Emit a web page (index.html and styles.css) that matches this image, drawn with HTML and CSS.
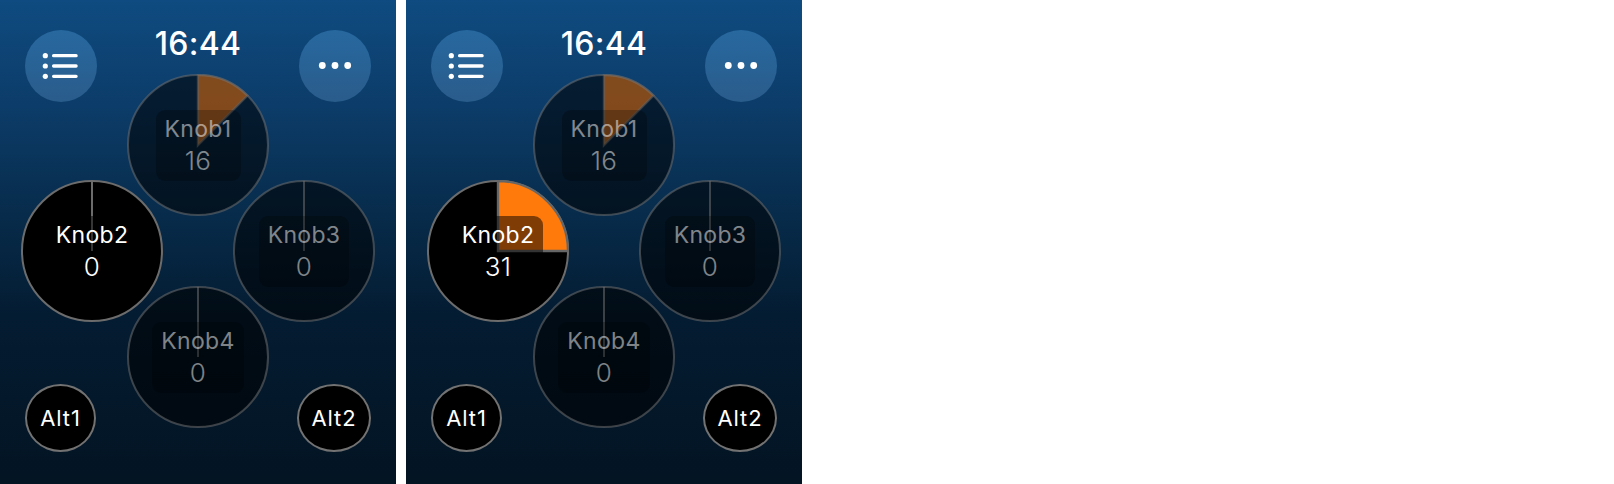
FILE: index.html
```html
<!DOCTYPE html>
<html lang="en">
<head>
<meta charset="utf-8">
<title>Knobs</title>
<link rel="stylesheet" href="styles.css">
</head>
<body>
<main class="screens">
  <section class="panel">
    <header class="topbar">
      <button class="round-btn"><svg class="icon" viewBox="0 0 72 72"><circle cx="20.3" cy="25.7" r="2.6"/><circle cx="20.3" cy="36" r="2.6"/><circle cx="20.3" cy="46.3" r="2.6"/><path d="M28.6 25.7h22.5M28.6 36h22.5M28.6 46.3h22.5"/></svg></button>
      <div class="time">16:44</div>
      <button class="round-btn"><svg class="icon" viewBox="0 0 72 72"><circle cx="23.3" cy="35.5" r="3.4"/><circle cx="36" cy="35.5" r="3.4"/><circle cx="48.7" cy="35.5" r="3.4"/></svg></button>
    </header>
    <div class="knobs">
      <div class="knob dim k1"><svg class="dial" viewBox="0 0 142 142"><circle class="face" cx="71" cy="71" r="70"/><path class="wedge" d="M71 71V1A70 70 0 0 1 120.5 21.5Z"/></svg><div class="tile"><span>Knob1</span><span class="value">16</span></div></div>
      <div class="knob k2"><svg class="dial" viewBox="0 0 142 142"><circle class="face" cx="71" cy="71" r="70"/><path class="needle" d="M71 71V1"/></svg><div class="tile"><span>Knob2</span><span class="value">0</span></div></div>
      <div class="knob dim k3"><svg class="dial" viewBox="0 0 142 142"><circle class="face" cx="71" cy="71" r="70"/><path class="needle" d="M71 71V1"/></svg><div class="tile"><span>Knob3</span><span class="value">0</span></div></div>
      <div class="knob dim k4"><svg class="dial" viewBox="0 0 142 142"><circle class="face" cx="71" cy="71" r="70"/><path class="needle" d="M71 71V1"/></svg><div class="tile"><span>Knob4</span><span class="value">0</span></div></div>
    </div>
    <footer class="altbar">
      <button class="alt alt1">Alt1</button>
      <button class="alt alt2">Alt2</button>
    </footer>
  </section>
  <section class="panel">
    <header class="topbar">
      <button class="round-btn"><svg class="icon" viewBox="0 0 72 72"><circle cx="20.3" cy="25.7" r="2.6"/><circle cx="20.3" cy="36" r="2.6"/><circle cx="20.3" cy="46.3" r="2.6"/><path d="M28.6 25.7h22.5M28.6 36h22.5M28.6 46.3h22.5"/></svg></button>
      <div class="time">16:44</div>
      <button class="round-btn"><svg class="icon" viewBox="0 0 72 72"><circle cx="23.3" cy="35.5" r="3.4"/><circle cx="36" cy="35.5" r="3.4"/><circle cx="48.7" cy="35.5" r="3.4"/></svg></button>
    </header>
    <div class="knobs">
      <div class="knob dim k1"><svg class="dial" viewBox="0 0 142 142"><circle class="face" cx="71" cy="71" r="70"/><path class="wedge" d="M71 71V1A70 70 0 0 1 120.5 21.5Z"/></svg><div class="tile"><span>Knob1</span><span class="value">16</span></div></div>
      <div class="knob k2"><svg class="dial" viewBox="0 0 142 142"><circle class="face" cx="71" cy="71" r="70"/><path class="wedge" d="M71 71V1A70 70 0 0 1 141 71Z"/></svg><div class="tile"><span>Knob2</span><span class="value">31</span></div></div>
      <div class="knob dim k3"><svg class="dial" viewBox="0 0 142 142"><circle class="face" cx="71" cy="71" r="70"/><path class="needle" d="M71 71V1"/></svg><div class="tile"><span>Knob3</span><span class="value">0</span></div></div>
      <div class="knob dim k4"><svg class="dial" viewBox="0 0 142 142"><circle class="face" cx="71" cy="71" r="70"/><path class="needle" d="M71 71V1"/></svg><div class="tile"><span>Knob4</span><span class="value">0</span></div></div>
    </div>
    <footer class="altbar">
      <button class="alt alt1">Alt1</button>
      <button class="alt alt2">Alt2</button>
    </footer>
  </section>
</main>
</body>
</html>
```
FILE: styles.css
```css
* { box-sizing: border-box; }
html, body { margin: 0; background: #fff; }
body { font-family: Inter, "Liberation Sans", sans-serif; color: #fff; }
.screens { display: flex; gap: 10px; }
.panel {
  width: 396px;
  height: 484px;
  display: flex;
  flex-direction: column;
  background: linear-gradient(180deg, #0f4b80 0%, #0c3c69 22%, #072b4a 45%, #041c32 65%, #031423 100%);
}
.topbar {
  display: flex;
  justify-content: space-between;
  align-items: flex-start;
  padding: 30px 25px 0;
}
.round-btn {
  width: 72px;
  height: 72px;
  padding: 0;
  border: 0;
  border-radius: 50%;
  background: linear-gradient(180deg, #27689f, #2a5c8b);
}
.icon { display: block; width: 72px; height: 72px; fill: #fff; stroke: none; }
.icon path { fill: none; stroke: #fff; stroke-width: 3.3; stroke-linecap: round; }
.time {
  margin-top: -4px;
  font-size: 32px;
  line-height: 36px;
  font-weight: 500;
  letter-spacing: 0.3px;
}
.knobs {
  display: grid;
  grid-template-columns: 106px 36px 70px 36px 106px;
  grid-template-rows: 106px 36px 70px 36px 106px;
  margin: -28px 0 0 21px;
  width: 354px;
}
.knob {
  display: grid;
  place-items: center;
  width: 142px;
  height: 142px;
}
.knob > * { grid-area: 1 / 1; }
.k1 { grid-area: 1 / 2 / 3 / 5; justify-self: center; }
.k2 { grid-area: 2 / 1 / 5 / 3; align-self: center; }
.k3 { grid-area: 2 / 4 / 5 / 6; align-self: center; }
.k4 { grid-area: 4 / 2 / 6 / 5; justify-self: center; }
.dial { display: block; width: 142px; height: 142px; }
.face { fill: #000; stroke: #6c6c6c; stroke-width: 2; }
.needle { fill: none; stroke: #6c6c6c; stroke-width: 2; }
.wedge { fill: #ff7a0a; stroke: #666; stroke-width: 2.4; }
.dim .face { fill: rgba(0, 0, 0, 0.55); stroke: rgba(110, 110, 110, 0.55); }
.dim .needle { stroke: rgba(110, 110, 110, 0.55); }
.dim .wedge { fill: rgba(255, 122, 10, 0.5); stroke: rgba(100, 100, 100, 0.55); }
.tile {
  display: flex;
  flex-direction: column;
  align-items: center;
  padding: 4px 9px 2px;
  height: 71px;
  border-radius: 9px;
  background: rgba(0, 0, 0, 0.5);
  font-size: 23px;
  line-height: 30px;
  letter-spacing: 0.3px;
}
.value { font-size: 26px; line-height: 34px; font-weight: 300; }
.dim .tile { background: rgba(0, 0, 0, 0.25); color: rgba(255, 255, 255, 0.5); }
.altbar {
  display: flex;
  justify-content: space-between;
  align-items: flex-start;
  margin-top: -44px;
  padding: 0 25px;
}
.alt {
  height: 68px;
  padding: 0;
  border: 2px solid #727272;
  border-radius: 50%;
  background: #000;
  color: #fff;
  font: 400 22px Inter, "Liberation Sans", sans-serif;
  letter-spacing: 0.9px;
}
.alt1 { width: 71px; }
.alt2 { width: 74px; }
```
